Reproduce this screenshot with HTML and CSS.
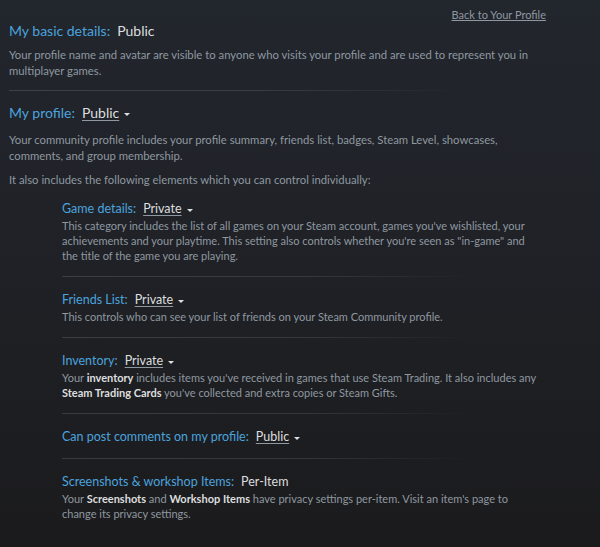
FILE: index.html
```html
<!DOCTYPE html>
<html>
<head>
<meta charset="utf-8">
<link rel="stylesheet" href="styles.css">
</head>
<body>
<div class="page">
  <div class="topbar"><a class="back" href="#">Back to Your Profile</a></div>

  <section class="block">
    <div class="title"><span class="label">My basic details:</span><span class="value">Public</span></div>
    <p class="desc">Your profile name and avatar are visible to anyone who visits your profile and are used to represent you in multiplayer games.</p>
  </section>
  <div class="sep"></div>

  <section class="block profile">
    <div class="title"><span class="label">My profile:</span><span class="value drop">Public</span><span class="caret"></span></div>
    <p class="desc">Your community profile includes your profile summary, friends list, badges, Steam Level, showcases, comments, and group membership.</p>
    <p class="desc">It also includes the following elements which you can control individually:</p>
  </section>

  <div class="sub">
    <section class="item">
      <div class="stitle"><span class="label">Game details:</span><span class="value drop">Private</span><span class="caret"></span></div>
      <p class="sdesc">This category includes the list of all games on your Steam account, games you've wishlisted, your achievements and your playtime. This setting also controls whether you're seen as "in-game" and the title of the game you are playing.</p>
    </section>
    <div class="sep"></div>
    <section class="item">
      <div class="stitle"><span class="label">Friends List:</span><span class="value drop">Private</span><span class="caret"></span></div>
      <p class="sdesc">This controls who can see your list of friends on your Steam Community profile.</p>
    </section>
    <div class="sep"></div>
    <section class="item">
      <div class="stitle"><span class="label">Inventory:</span><span class="value drop">Private</span><span class="caret"></span></div>
      <p class="sdesc">Your <b>inventory</b> includes items you've received in games that use Steam Trading. It also includes any <b>Steam Trading Cards</b> you've collected and extra copies or Steam Gifts.</p>
    </section>
    <div class="sep"></div>
    <section class="item">
      <div class="stitle"><span class="label">Can post comments on my profile:</span><span class="value drop">Public</span><span class="caret"></span></div>
    </section>
    <div class="sep"></div>
    <section class="item">
      <div class="stitle"><span class="label">Screenshots &amp; workshop Items:</span><span class="value">Per-Item</span></div>
      <p class="sdesc">Your <b>Screenshots</b> and <b>Workshop Items</b> have privacy settings per-item. Visit an item's page to change its privacy settings.</p>
    </section>
  </div>
</div>
</body>
</html>
```
FILE: styles.css
```css
html, body {
  margin: 0;
  padding: 0;
  height: 100%;
}
body {
  background: linear-gradient(180deg, #22262d 0%, #1f2126 50%, #1b1b1d 100%);
  font-family: "Lato", "Liberation Sans", sans-serif;
  font-size: 11.3px;
  color: #8f98a0;
}
.page {
  width: 537px;
  padding: 8px 0 0 9px;
}
.topbar {
  display: flex;
  justify-content: flex-end;
  height: 13px;
  font-size: 11px;
}
.back {
  color: #8f98a0;
  text-decoration: underline;
}
.block {
  padding-top: 1px;
}
.block .desc {
  max-width: 530px;
}
.title {
  display: flex;
  align-items: center;
  font-size: 14px;
  line-height: 18px;
}
.label {
  color: #4ba3de;
}
.value {
  color: #dcdedf;
  margin-left: 7px;
}
.drop {
  text-decoration: underline;
  text-underline-offset: 2px;
  text-decoration-color: #8f98a0;
}
.caret {
  width: 0;
  height: 0;
  border-left: 3px solid transparent;
  border-right: 3px solid transparent;
  border-top: 3px solid #dcdedf;
  margin-left: 5px;
  margin-top: 3px;
}
.desc {
  margin: 7px 0 0;
  line-height: 16px;
}
.profile .desc {
  margin-top: 10px;
}
.profile .desc + .desc {
  margin-top: 8px;
}
.sep {
  height: 1px;
  margin: 11px 0 12px;
  background: linear-gradient(90deg, rgba(143,152,160,0.25) 0%, rgba(143,152,160,0.2) 50%, rgba(143,152,160,0) 85%);
}
.sub {
  margin: 13px 0 0 53px;
}
.sub .sep {
  margin: 13px 0 15px;
}
.stitle {
  display: flex;
  align-items: center;
  font-size: 12.5px;
  line-height: 16px;
}
.sdesc {
  margin: 1px 0 0;
  max-width: 478px;
  font-size: 11px;
  line-height: 15px;
}
b {
  color: #dcdedf;
  font-weight: bold;
}
```
